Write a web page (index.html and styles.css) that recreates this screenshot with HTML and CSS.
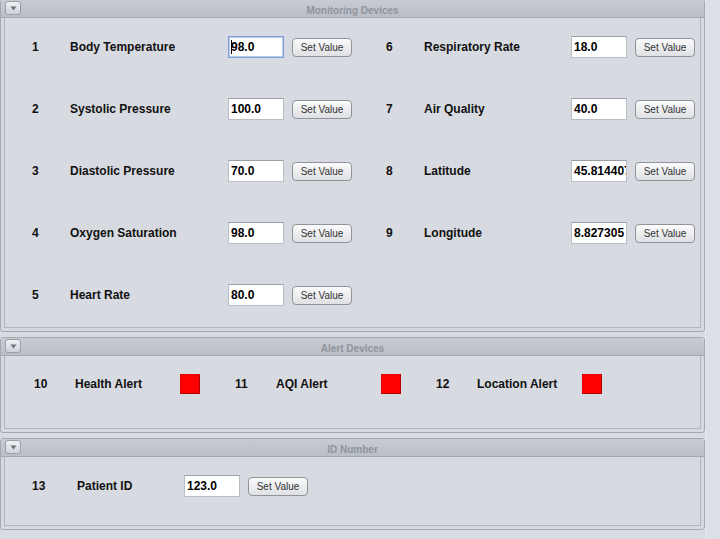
FILE: index.html
```html
<!DOCTYPE html>
<html>
<head>
<meta charset="utf-8">
<link rel="stylesheet" href="styles.css">
</head>
<body>
<div class="page">
  <section class="panel panel-first">
    <div class="panel-header">
      <span class="collapse"><svg width="7" height="5" viewBox="0 0 7 5"><path d="M0.5 0.5 L6.5 0.5 L3.5 4.5 Z" fill="#6d7178"/></svg></span>
      <span class="title">Monitoring Devices</span>
    </div>
    <div class="panel-body monitor">
      <div class="field left"><span class="num">1</span><span class="label">Body Temperature</span><span class="input focused"><span class="caret"></span>98.0</span><button class="btn">Set Value</button></div>
      <div class="field left"><span class="num">2</span><span class="label">Systolic Pressure</span><span class="input">100.0</span><button class="btn">Set Value</button></div>
      <div class="field left"><span class="num">3</span><span class="label">Diastolic Pressure</span><span class="input">70.0</span><button class="btn">Set Value</button></div>
      <div class="field left"><span class="num">4</span><span class="label">Oxygen Saturation</span><span class="input">98.0</span><button class="btn">Set Value</button></div>
      <div class="field left"><span class="num">5</span><span class="label">Heart Rate</span><span class="input">80.0</span><button class="btn">Set Value</button></div>
      <div class="field right"><span class="num">6</span><span class="label">Respiratory Rate</span><span class="input">18.0</span><button class="btn">Set Value</button></div>
      <div class="field right"><span class="num">7</span><span class="label">Air Quality</span><span class="input">40.0</span><button class="btn">Set Value</button></div>
      <div class="field right"><span class="num">8</span><span class="label">Latitude</span><span class="input">45.814407</span><button class="btn">Set Value</button></div>
      <div class="field right"><span class="num">9</span><span class="label">Longitude</span><span class="input">8.827305</span><button class="btn">Set Value</button></div>
    </div>
  </section>

  <section class="panel">
    <div class="panel-header">
      <span class="collapse"><svg width="7" height="5" viewBox="0 0 7 5"><path d="M0.5 0.5 L6.5 0.5 L3.5 4.5 Z" fill="#6d7178"/></svg></span>
      <span class="title">Alert Devices</span>
    </div>
    <div class="panel-body alerts">
      <div class="alert"><span class="anum">10</span><span class="alabel">Health Alert</span><span class="led"></span></div>
      <div class="alert"><span class="anum">11</span><span class="alabel">AQI Alert</span><span class="led"></span></div>
      <div class="alert"><span class="anum">12</span><span class="alabel">Location Alert</span><span class="led"></span></div>
    </div>
  </section>

  <section class="panel">
    <div class="panel-header">
      <span class="collapse"><svg width="7" height="5" viewBox="0 0 7 5"><path d="M0.5 0.5 L6.5 0.5 L3.5 4.5 Z" fill="#6d7178"/></svg></span>
      <span class="title">ID Number</span>
    </div>
    <div class="panel-body idrow">
      <span class="inum">13</span><span class="ilabel">Patient ID</span><span class="input">123.0</span><button class="btn">Set Value</button>
    </div>
  </section>
</div>
</body>
</html>
```
FILE: styles.css
```css
* { box-sizing: border-box; }
html, body {
  margin: 0;
  padding: 0;
  background: #dcdfe5;
  font-family: "Liberation Sans", Arial, sans-serif;
  color: #111;
}
.page {
  width: 706px;
  height: 539px;
  overflow: hidden;
  background: #d8dbe1;
  border-right: 1px solid #e4e6eb;
}
.panel {
  border: 1px solid #a4a8b0;
  border-radius: 3px;
  background: #d6d9df;
  margin-bottom: 5px;
}
.panel-first { margin-top: -1px; }
.panel-header {
  position: relative;
  height: 18px;
  background: linear-gradient(#c8cbd2, #babec6);
  border-bottom: 1px solid #a3a7af;
  text-align: center;
}
.title {
  font-size: 10px;
  font-weight: bold;
  color: #8f949d;
  line-height: 17px;
}
.collapse {
  position: absolute;
  left: 4px;
  top: 1px;
  width: 16px;
  height: 14px;
  border: 1px solid #9a9ea6;
  border-radius: 3px;
  background: linear-gradient(#eef0f3, #cfd2d8);
  display: flex;
  align-items: center;
  justify-content: center;
}
.panel-body {
  margin: 0 3px 3px 3px;
  border: 1px solid #b0b4bc;
  border-top: none;
  background: #d7dae0;
}
.monitor {
  height: 310px;
  padding: 18px 0 0 27px;
  display: grid;
  grid-auto-flow: column;
  grid-template-rows: repeat(5, 22px);
  grid-template-columns: 354px 1fr;
  row-gap: 40px;
}
.field {
  display: flex;
  align-items: center;
  font-size: 12px;
  font-weight: bold;
}
.num { width: 38px; }
.field.left .label { width: 158px; }
.field.right .label { width: 147px; }
.input {
  display: flex;
  align-items: center;
  width: 56px;
  height: 22px;
  background: #fff;
  border: 1px solid #b9bdc4;
  border-top-color: #9a9ea5;
  padding-left: 2px;
  font-size: 12px;
  font-weight: bold;
  color: #000;
  white-space: nowrap;
  overflow: hidden;
}
.input.focused {
  border: 1px solid #7d9fd3;
  box-shadow: inset 0 0 0 1px #b7cbe9;
}
.caret {
  display: inline-block;
  width: 1px;
  height: 14px;
  background: #000;
  margin-right: -1px;
}
.btn {
  margin-left: 8px;
  width: 60px;
  height: 19px;
  padding: 0;
  border: 1px solid #8f939a;
  border-radius: 4px;
  background: linear-gradient(#fbfbfc, #dfe0e3);
  font-family: "Liberation Sans", Arial, sans-serif;
  font-size: 10px;
  color: #333;
}
.alerts {
  height: 73px;
  padding: 18px 0 0 29px;
  display: flex;
}
.alert {
  width: 201px;
  display: flex;
  align-items: center;
  height: 20px;
  font-size: 12px;
  font-weight: bold;
}
.anum { width: 41px; }
.alabel { width: 105px; }
.led {
  width: 20px;
  height: 20px;
  background: #ff0000;
  border: 1px solid #b30000;
  border-top-color: #e00000;
  border-left-color: #e00000;
}
.idrow {
  height: 69px;
  padding: 18px 0 0 27px;
  display: flex;
  align-items: flex-start;
  font-size: 12px;
  font-weight: bold;
}
.idrow .inum, .idrow .ilabel { line-height: 22px; }
.inum { width: 45px; }
.ilabel { width: 107px; }
.idrow .btn { margin-top: 2px; }
```
